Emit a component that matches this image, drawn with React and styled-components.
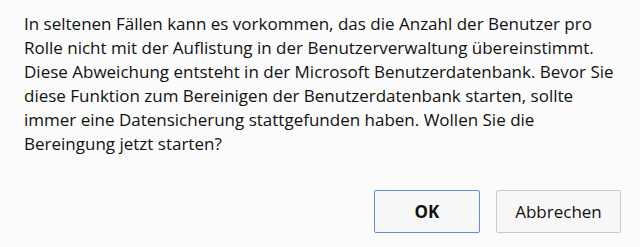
import styled, { createGlobalStyle } from "styled-components";

const GlobalStyle = createGlobalStyle`
  body {
    margin: 0;
    background: #fbfbfb;
    font-family: "Open Sans", "Noto Sans", sans-serif;
  }
`;

const Dialog = styled.div`
  width: 640px;
  height: 247px;
  box-sizing: border-box;
  padding: 12px 19px 0 24px;
  display: flex;
  flex-direction: column;
`;

const Message = styled.p`
  margin: 0;
  width: 592px;
  font-size: 17px;
  line-height: 24px;
  color: #111;
`;

const Actions = styled.div`
  margin-top: auto;
  margin-bottom: 14px;
  display: flex;
  justify-content: flex-end;
  gap: 16px;
`;

const Button = styled.button`
  width: ${(p) => p.$width}px;
  height: 43px;
  box-sizing: border-box;
  background: #f7f7f7;
  border: 1px solid ${(p) => (p.$primary ? "#5e8fe0" : "#c9c9c9")};
  border-radius: 2px;
  font-family: inherit;
  font-size: 17px;
  font-weight: ${(p) => (p.$primary ? 700 : 400)};
  color: #111;
`;

const App = () => {
  return (
    <>
      <GlobalStyle />
      <Dialog>
        <Message>
          In seltenen Fällen kann es vorkommen, das die Anzahl der Benutzer pro
          Rolle nicht mit der Auflistung in der Benutzerverwaltung übereinstimmt.
          Diese Abweichung entsteht in der Microsoft Benutzerdatenbank. Bevor Sie
          diese Funktion zum Bereinigen der Benutzerdatenbank starten, sollte
          immer eine Datensicherung stattgefunden haben. Wollen Sie die
          Bereingung jetzt starten?
        </Message>
        <Actions>
          <Button $primary $width={106}>OK</Button>
          <Button $width={125}>Abbrechen</Button>
        </Actions>
      </Dialog>
    </>
  );
};

export default App;
